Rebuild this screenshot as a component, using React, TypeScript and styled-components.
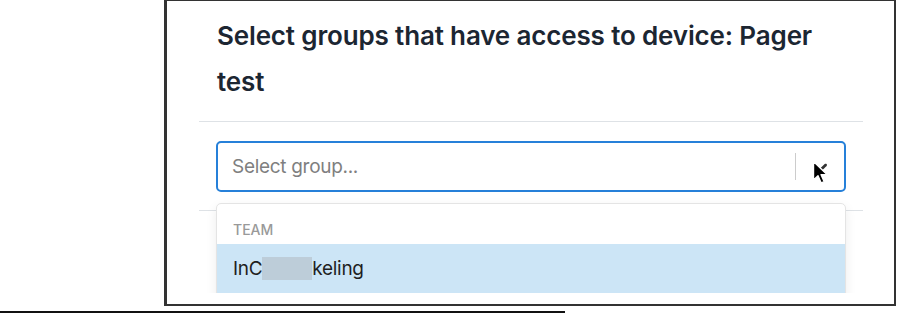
import { createGlobalStyle } from "styled-components";
import styled from "styled-components";

const GlobalStyle = createGlobalStyle`
  html, body {
    margin: 0;
    padding: 0;
    background: #fff;
  }
  body {
    font-family: Inter, "Noto Sans", "Liberation Sans", sans-serif;
    overflow: hidden;
  }
`;

const Page = styled.div`
  width: 897px;
  height: 313px;
  display: flex;
  flex-direction: column;
`;

const Frame = styled.div`
  margin-left: 164px;
  width: 732px;
  height: 307px;
  box-sizing: border-box;
  border: 2px solid #333;
  border-left-width: 3px;
  border-top-width: 1px;
  background: #fff;
`;

// the screenshot inside the frame, cut off at its bottom edge
const Shot = styled.div`
  height: 292px;
  overflow: hidden;
`;

const Rule = styled.div`
  margin-top: 5px;
  width: 565px;
  height: 2px;
  background: #111;
`;

const Modal = styled.div`
  margin-left: 32px;
  width: 664px;
  display: flex;
  flex-direction: column;
`;

const Header = styled.div`
  padding: 12px 18px 16px;
  border-bottom: 1px solid #dee2e6;
`;

const Title = styled.h2`
  margin: 0;
  max-width: 615px;
  font-size: 26px;
  line-height: 46px;
  font-weight: 600;
  letter-spacing: -0.15px;
  color: #1c2632;
`;

const Body = styled.div`
  padding: 19px 17px 18px;
`;

const SelectBox = styled.div`
  position: relative;
`;

const Control = styled.div`
  height: 51px;
  box-sizing: border-box;
  border: 2px solid #2680d9;
  border-radius: 5px;
  display: flex;
  align-items: center;
  background: #fff;
  position: relative;
`;

const ValueArea = styled.div`
  flex: 1;
  padding-left: 14px;
`;

const Placeholder = styled.span`
  font-size: 19px;
  letter-spacing: -0.3px;
  color: #7f7f7f;
`;

const Separator = styled.span`
  align-self: stretch;
  width: 1px;
  margin: 10px 0;
  background: #ccc;
`;

const Indicator = styled.div`
  width: 48px;
  display: flex;
  align-items: center;
  justify-content: center;
  color: #333;
`;

const Cursor = styled.svg`
  position: absolute;
  left: 594px;
  top: 17px;
`;

const Menu = styled.div`
  position: absolute;
  top: calc(100% + 11px);
  left: 0;
  width: 100%;
  box-sizing: border-box;
  padding-bottom: 10px;
  background: #fff;
  border: 1px solid #e4e4e4;
  border-radius: 5px;
  box-shadow: 0 4px 11px rgba(0, 0, 0, 0.08);
  z-index: 2;
`;

const GroupHeading = styled.div`
  padding: 17px 16px 6px;
  font-size: 14px;
  line-height: 17px;
  font-weight: 500;
  text-transform: uppercase;
  color: #999;
`;

const Option = styled.div<{ $focused?: boolean }>`
  padding: 12px 16px;
  font-size: 19px;
  line-height: 25px;
  letter-spacing: -0.3px;
  color: #1f1f1f;
  background: ${(p) => (p.$focused ? "#cce5f6" : "transparent")};
`;

const Redacted = styled.span`
  display: inline-block;
  width: 50px;
  height: 23px;
  vertical-align: -5px;
  background: #bdcdd9;
`;

const Footer = styled.div`
  border-top: 1px solid #dee2e6;
  height: 100px;
`;

export default function App() {
  return (
    <>
      <GlobalStyle />
      <Page>
        <Frame>
          <Shot>
            <Modal>
              <Header>
                <Title>Select groups that have access to device: Pager test</Title>
              </Header>
              <Body>
                <SelectBox>
                  <Control>
                    <ValueArea>
                      <Placeholder>Select group...</Placeholder>
                    </ValueArea>
                    <Separator />
                    <Indicator>
                      <svg width="24" height="24" viewBox="0 0 20 20" fill="currentColor">
                        <path d="M4.516 7.548c0.436-0.446 1.043-0.481 1.576 0l3.908 3.747 3.908-3.747c0.533-0.481 1.141-0.446 1.574 0 0.436 0.445 0.408 1.197 0 1.615-0.406 0.418-4.695 4.502-4.695 4.502-0.217 0.223-0.502 0.335-0.787 0.335s-0.57-0.112-0.789-0.335c0 0-4.287-4.084-4.695-4.502s-0.436-1.17 0-1.615z" />
                      </svg>
                    </Indicator>
                    <Cursor width="18" height="26" viewBox="0 0 18 26">
                      <path
                        d="M1.5 1.5 L1.5 20 L6 15.8 L9.2 23 L12.2 21.7 L9.1 14.6 L15 14.6 Z"
                        fill="#000"
                        stroke="#fff"
                        strokeWidth="1.4"
                        strokeLinejoin="round"
                      />
                    </Cursor>
                  </Control>
                  <Menu>
                    <GroupHeading>Team</GroupHeading>
                    <Option $focused>
                      InC<Redacted />keling
                    </Option>
                  </Menu>
                </SelectBox>
              </Body>
              <Footer />
            </Modal>
          </Shot>
        </Frame>
        <Rule />
      </Page>
    </>
  );
}
